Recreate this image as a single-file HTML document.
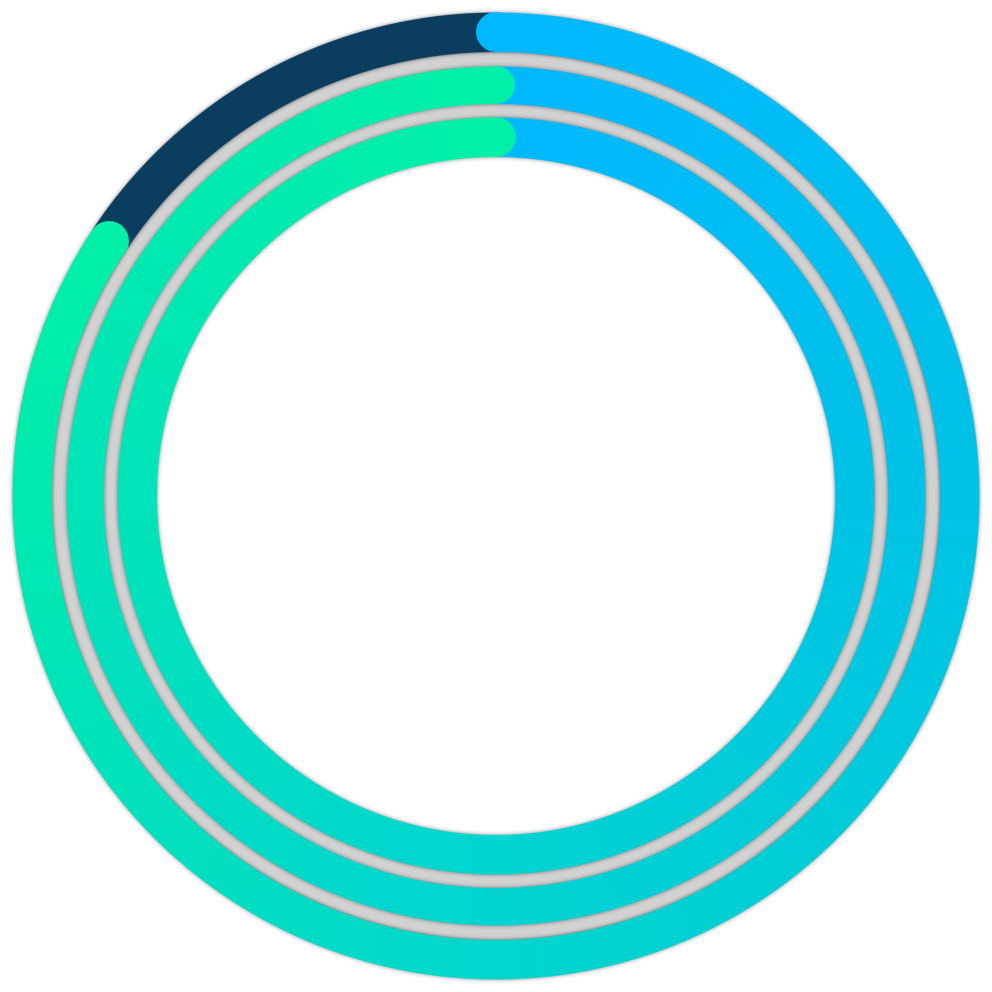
<!DOCTYPE html>
<html><head><style>
html,body{margin:0;padding:0;background:#fff;width:992px;height:992px;overflow:hidden}
.c{position:absolute;border-radius:50%}
.ring{position:absolute;border-radius:50%;filter:drop-shadow(0 0 2px rgba(0,0,0,.45))}
.ring>div{position:absolute;inset:0;border-radius:50%}
.cap{position:absolute;border-radius:50%}
</style></head><body>
<div class="c" style="left:50px;top:50px;width:892px;height:892px;background:#d2d2d2;box-shadow:inset 0 0 4px rgba(0,0,0,.5)"></div>
<div class="c" style="left:156px;top:156px;width:680px;height:680px;background:#fff"></div>
<!-- outer -->
<div class="ring" style="left:12px;top:12px;width:968px;height:968px">
 <div style="background:conic-gradient(from 0deg,#00b8ff 0deg,#00c2e6 90deg,#00d6cc 180deg,#00eab0 270deg,#00f0a8 303.4deg,#0a3d5e 303.4deg,#0a3d5e 360deg);-webkit-mask:radial-gradient(circle closest-side,transparent 443.5px,#000 444.5px,#000 483px,transparent 484px);mask:radial-gradient(circle closest-side,transparent 443.5px,#000 444.5px,#000 483px,transparent 484px)"></div>
</div>
<div class="cap" style="left:476px;top:12px;width:40px;height:40px;background:#00b8ff"></div>
<div class="cap" style="left:89px;top:221px;width:40px;height:40px;background:#00f0a8"></div>
<!-- middle -->
<div class="ring" style="left:66px;top:66px;width:860px;height:860px">
 <div style="background:conic-gradient(from 0deg,#00b8ff 0deg,#00c2e6 90deg,#00d4d0 180deg,#00e4b8 270deg,#00f0a8 360deg);-webkit-mask:radial-gradient(circle closest-side,transparent 391.5px,#000 392.5px,#000 429px,transparent 430px);mask:radial-gradient(circle closest-side,transparent 391.5px,#000 392.5px,#000 429px,transparent 430px)"></div>
</div>
<div class="cap" style="left:477px;top:66px;width:38px;height:38px;background:#00f0a8"></div>
<!-- inner -->
<div class="ring" style="left:117px;top:117px;width:758px;height:758px">
 <div style="background:conic-gradient(from 0deg,#00b8ff 0deg,#00c2e6 90deg,#00d4d0 180deg,#00e4b8 270deg,#00f0a8 360deg);-webkit-mask:radial-gradient(circle closest-side,transparent 338.5px,#000 339.5px,#000 378px,transparent 379px);mask:radial-gradient(circle closest-side,transparent 338.5px,#000 339.5px,#000 378px,transparent 379px)"></div>
</div>
<div class="cap" style="left:476px;top:117px;width:40px;height:40px;background:#00f0a8"></div>
</body></html>
